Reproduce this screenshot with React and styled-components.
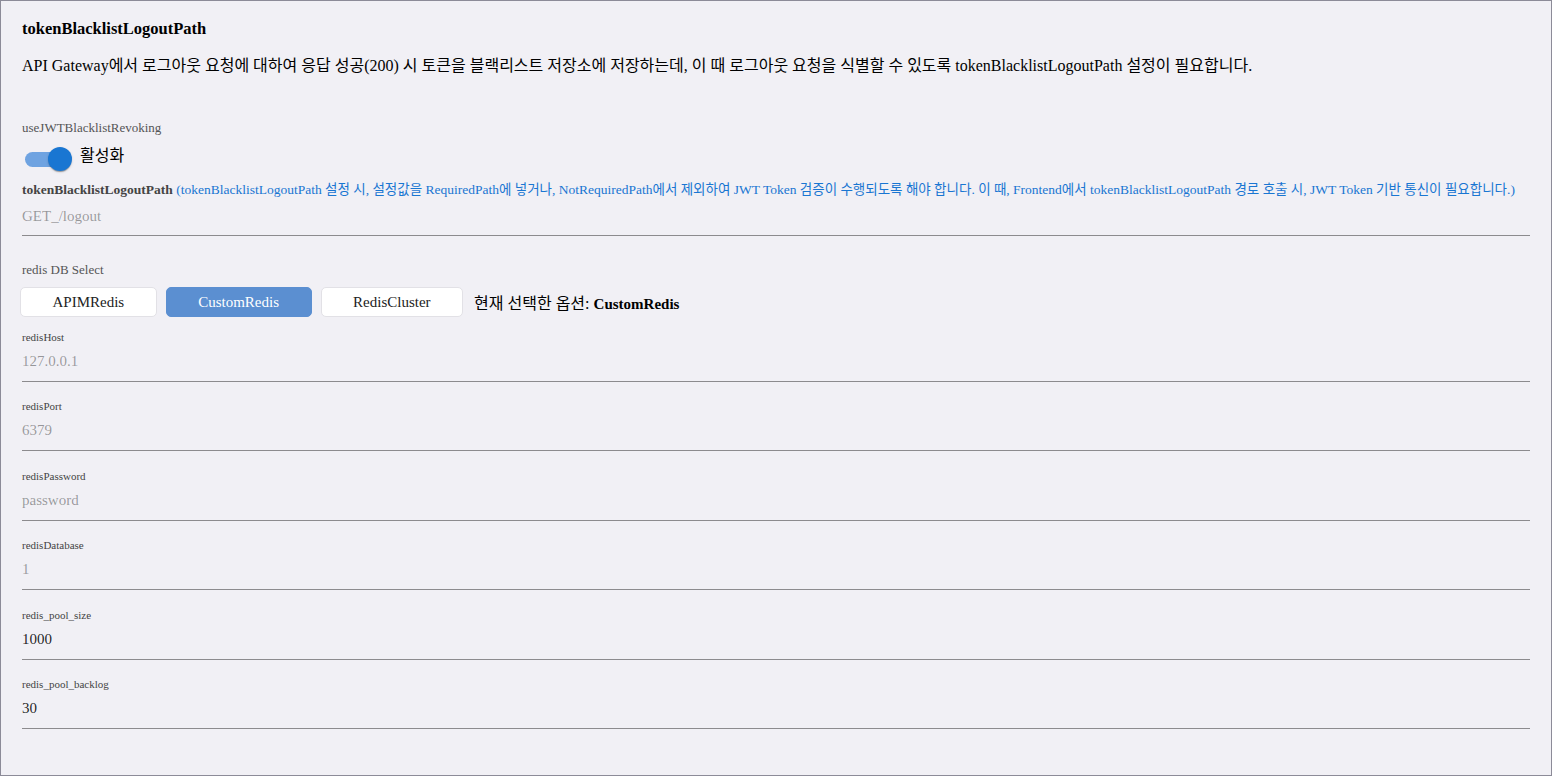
import React, { useState } from "react";
import styled, { createGlobalStyle } from "styled-components";

const GlobalStyle = createGlobalStyle`
    html, body {
        margin: 0;
        padding: 0;
        background: #f1f0f5;
    }
    body {
        font-family: "Liberation Serif", "Noto Sans CJK KR", serif;
        color: rgba(0, 0, 0, 0.87);
    }
    * {
        box-sizing: border-box;
    }
`;

const Page = styled.div`
    min-height: 776px;
    border: 1px solid #8c8b98;
    background: #f1f0f5;
    padding: 18px 21px 40px 21px;
`;

const Title = styled.h3`
    margin: 0;
    font-size: 16.5px;
    line-height: 20px;
    font-weight: 700;
    color: #000;
`;

const Description = styled.p`
    margin: 17px 0 0 0;
    font-size: 16px;
    line-height: 20px;
    color: #000;
`;

const SectionLabel = styled.div`
    margin-top: ${(props) => props.top || 0}px;
    font-size: 13px;
    line-height: 16px;
    color: #555;
`;

const ToggleRow = styled.label`
    display: flex;
    align-items: flex-start;
    height: 24px;
    margin-top: 11px;
    cursor: pointer;
`;

const SwitchBox = styled.span`
    position: relative;
    display: inline-block;
    width: 50px;
    height: 24px;
    margin-left: 3px;
    margin-right: 5px;
    flex-shrink: 0;
`;

const Track = styled.span`
    position: absolute;
    left: 0;
    top: 5px;
    width: 35px;
    height: 15px;
    border-radius: 8px;
    background: ${(props) => (props.on ? "#6fa3e1" : "#b9b9bf")};
`;

const Thumb = styled.span`
    position: absolute;
    top: 0;
    left: ${(props) => (props.on ? 23 : 0)}px;
    width: 24px;
    height: 24px;
    border-radius: 50%;
    background: ${(props) => (props.on ? "#1976d2" : "#fafafa")};
    box-shadow: 0 2px 1px -1px rgba(0, 0, 0, 0.2), 0 1px 1px 0 rgba(0, 0, 0, 0.14),
        0 1px 3px 0 rgba(0, 0, 0, 0.12);
`;

const ToggleText = styled.span`
    font-size: 16px;
    line-height: 18px;
    color: #000;
`;

const HelperLabel = styled.div`
    margin-top: 11px;
    font-size: 13.5px;
    line-height: 16px;
    white-space: nowrap;
    color: #444;

    b {
        font-weight: 700;
    }
`;

const HelperNote = styled.span`
    color: #1976d2;
`;

const InputLine = styled.div`
    margin-top: ${(props) => props.top || 7}px;
    padding-bottom: ${(props) => props.pad || 10}px;
    border-bottom: 1px solid rgba(0, 0, 0, 0.42);
    font-size: 15px;
    line-height: 20px;
    color: ${(props) => (props.disabled ? "rgba(0, 0, 0, 0.38)" : "rgba(0, 0, 0, 0.87)")};
`;

const ButtonRow = styled.div`
    display: flex;
    align-items: center;
    gap: 9px;
    margin-top: 9px;
    margin-left: -2px;
`;

const OptionButton = styled.button`
    height: 30px;
    padding: 0 31.5px;
    border-radius: 5px;
    border: 1px solid ${(props) => (props.active ? "#5b8fd1" : "#e2e1e6")};
    background: ${(props) => (props.active ? "#5b8fd1" : "#ffffff")};
    color: ${(props) => (props.active ? "#ffffff" : "#222")};
    font-family: "Liberation Serif", "Noto Sans CJK KR", serif;
    font-size: 15px;
    cursor: pointer;
`;

const Selected = styled.span`
    margin-left: 2px;
    font-size: 16px;
    color: #000;

    b {
        font-size: 15px;
        font-weight: 700;
    }
`;

const Field = styled.div`
    margin-top: ${(props) => props.top || 17.4}px;
`;

const FieldLabel = styled.div`
    font-size: 11px;
    line-height: 14px;
    color: #444;
`;

const fields = [
    { label: "redisHost", value: "127.0.0.1", disabled: true },
    { label: "redisPort", value: "6379", disabled: true },
    { label: "redisPassword", value: "password", disabled: true },
    { label: "redisDatabase", value: "1", disabled: true },
    { label: "redis_pool_size", value: "1000" },
    { label: "redis_pool_backlog", value: "30" },
];

const options = ["APIMRedis", "CustomRedis", "RedisCluster"];

const App = () => {
    const [on, setOn] = useState(true);
    const [selected, setSelected] = useState("CustomRedis");

    return (
        <>
            <GlobalStyle />
            <Page>
                <Title>tokenBlacklistLogoutPath</Title>
                <Description>
                    API Gateway에서 로그아웃 요청에 대하여 응답 성공(200) 시 토큰을 블랙리스트
                    저장소에 저장하는데, 이 때 로그아웃 요청을 식별할 수 있도록
                    tokenBlacklistLogoutPath 설정이 필요합니다.
                </Description>

                <SectionLabel top={44}>useJWTBlacklistRevoking</SectionLabel>
                <ToggleRow onClick={() => setOn(!on)}>
                    <SwitchBox>
                        <Track on={on ? 1 : 0} />
                        <Thumb on={on ? 1 : 0} />
                    </SwitchBox>
                    <ToggleText>활성화</ToggleText>
                </ToggleRow>

                <HelperLabel>
                    <b>tokenBlacklistLogoutPath</b>{" "}
                    <HelperNote>
                        (tokenBlacklistLogoutPath 설정 시, 설정값을 RequiredPath에 넣거나,
                        NotRequiredPath에서 제외하여 JWT Token 검증이 수행되도록 해야 합니다. 이
                        때, Frontend에서 tokenBlacklistLogoutPath 경로 호출 시, JWT Token 기반
                        통신이 필요합니다.)
                    </HelperNote>
                </HelperLabel>
                <InputLine disabled top={8} pad={9}>
                    GET_/logout
                </InputLine>

                <SectionLabel top={26}>redis DB Select</SectionLabel>
                <ButtonRow>
                    {options.map((option) => (
                        <OptionButton
                            key={option}
                            active={selected === option ? 1 : 0}
                            onClick={() => setSelected(option)}
                        >
                            {option}
                        </OptionButton>
                    ))}
                    <Selected>
                        현재 선택한 옵션: <b>{selected}</b>
                    </Selected>
                </ButtonRow>

                {fields.map((field, index) => (
                    <Field key={field.label} top={index === 0 ? 13 : 17.4}>
                        <FieldLabel>{field.label}</FieldLabel>
                        <InputLine disabled={field.disabled}>{field.value}</InputLine>
                    </Field>
                ))}
            </Page>
        </>
    );
};

export default App;
